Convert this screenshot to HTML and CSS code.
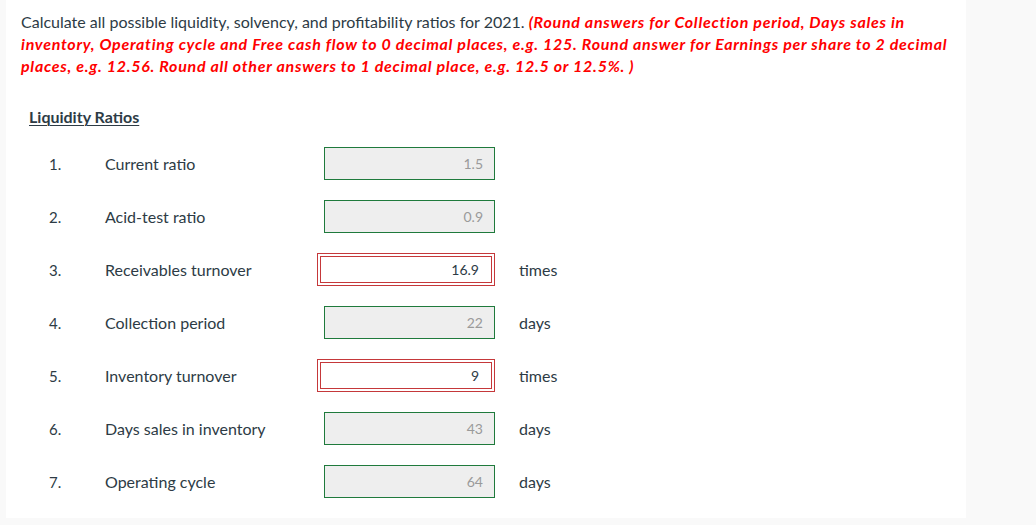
FILE: index.html
```html
<!DOCTYPE html>
<html>
<head>
<meta charset="utf-8">
<link rel="stylesheet" href="styles.css">
</head>
<body>
<div class="page">
  <p class="intro">Calculate all possible liquidity, solvency, and profitability ratios for 2021. <strong class="hint">(Round answers for Collection period, Days sales in inventory, Operating cycle and Free cash flow to 0 decimal places, e.g. 125. Round answer for Earnings per share to 2 decimal places, e.g. 12.56. Round all other answers to 1 decimal place, e.g. 12.5 or 12.5%. )</strong></p>
  <h3 class="section">Liquidity Ratios</h3>
  <div class="rows">
    <div class="row">
      <span class="num">1.</span><span class="label">Current ratio</span>
      <span class="cell"><span class="field ok">1.5</span></span><span class="unit"></span>
    </div>
    <div class="row">
      <span class="num">2.</span><span class="label">Acid-test ratio</span>
      <span class="cell"><span class="field ok">0.9</span></span><span class="unit"></span>
    </div>
    <div class="row">
      <span class="num">3.</span><span class="label">Receivables turnover</span>
      <span class="cell"><span class="wrong"><span class="field bad">16.9</span></span></span><span class="unit">times</span>
    </div>
    <div class="row">
      <span class="num">4.</span><span class="label">Collection period</span>
      <span class="cell"><span class="field ok">22</span></span><span class="unit">days</span>
    </div>
    <div class="row">
      <span class="num">5.</span><span class="label">Inventory turnover</span>
      <span class="cell"><span class="wrong"><span class="field bad">9</span></span></span><span class="unit">times</span>
    </div>
    <div class="row">
      <span class="num">6.</span><span class="label">Days sales in inventory</span>
      <span class="cell"><span class="field ok">43</span></span><span class="unit">days</span>
    </div>
    <div class="row">
      <span class="num">7.</span><span class="label">Operating cycle</span>
      <span class="cell"><span class="field ok">64</span></span><span class="unit">days</span>
    </div>
  </div>
</div>
</body>
</html>
```

FILE: styles.css
```css
html, body {
  margin: 0;
  padding: 0;
  background: #f9f9f9;
}
body {
  font-family: Lato, "Liberation Sans", sans-serif;
  color: #2d3b45;
}
.page {
  margin-left: 6px;
  width: 960px;
  height: 518px;
  background: #fff;
  box-sizing: border-box;
  padding-top: 11px;
}
.intro {
  margin: 0;
  padding: 0 4px 0 15px;
  font-size: 16px;
  line-height: 22px;
}
.hint {
  color: #f00;
  font-style: italic;
  font-weight: 700;
  font-size: 16px;
  letter-spacing: 0.72px;
  line-height: 22px;
}
.section {
  margin: 29px 0 0 23px;
  font-size: 16px;
  font-weight: 700;
  line-height: 22px;
  text-decoration: underline;
  text-underline-offset: 2px;
  text-decoration-thickness: 1px;
}
.rows {
  margin-top: 9px;
}
.row {
  display: grid;
  grid-template-columns: 57px 212px 202px auto;
  align-items: center;
  height: 53px;
  padding-left: 42px;
  font-size: 16px;
}
.num {
  padding-left: 1px;
  font-size: 15px;
}
.cell {
  display: flex;
  align-items: center;
}
.field {
  box-sizing: border-box;
  display: block;
  font-size: 14px;
  text-align: right;
  line-height: 1;
}
.ok {
  width: 171px;
  height: 33px;
  margin-left: 7px;
  padding: 9px 11px 0 0;
  background: #eeeeee;
  border: 1px solid #1f7a3c;
  color: #9a9a9a;
}
.wrong {
  box-sizing: border-box;
  display: block;
  width: 178px;
  height: 33px;
  padding: 2px;
  border: 1px solid #c5383a;
}
.bad {
  width: 172px;
  height: 27px;
  padding: 6px 12px 0 0;
  border: 1px solid #c5383a;
  background: #fff;
  color: #2d3b45;
}
```
